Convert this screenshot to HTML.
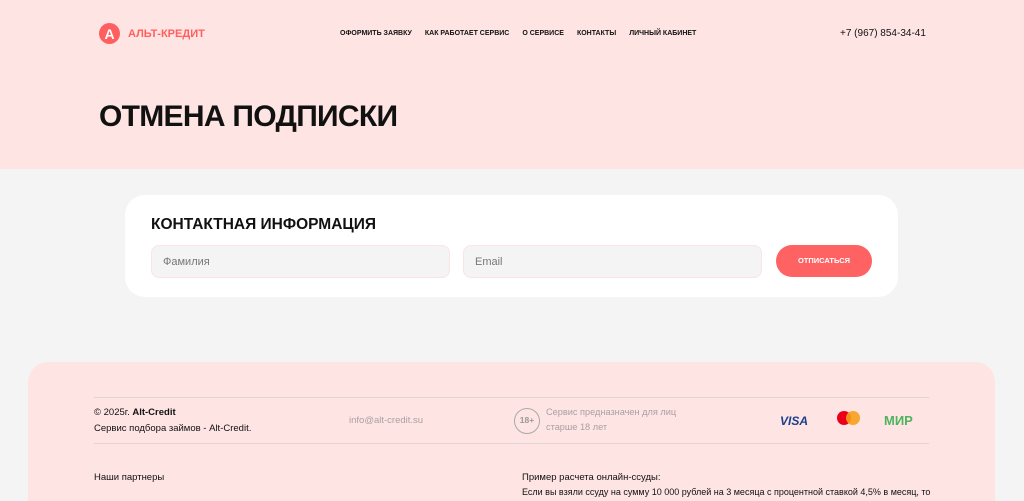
<!DOCTYPE html>
<html><head><meta charset="utf-8"><style>
*{box-sizing:border-box;margin:0;padding:0}
html,body{width:1024px;height:501px;overflow:hidden}
body{background:#f4f4f4;font-family:"Liberation Sans",sans-serif;color:#111;position:relative}
.hdr{position:absolute;left:0;top:0;width:1024px;height:169px;background:#ffe4e4}
.logo{position:absolute;left:99px;top:23px;display:flex;align-items:center}
.logo .c{width:21px;height:21px;border-radius:50%;background:#ff5f5f;color:#fff;font-weight:bold;font-size:14px;display:flex;align-items:center;justify-content:center}
.logo span{color:#ff5f5f;font-size:11px;font-weight:bold;margin-left:8px}
.nav{position:absolute;top:30px;left:340px;font-size:7px;font-weight:bold;display:flex}
.nav a{margin-right:13px;color:#111;text-decoration:none}
.phone{position:absolute;left:840px;top:28px;font-size:10px}
h1{position:absolute;left:99px;top:100px;font-size:30px;font-weight:bold;letter-spacing:-.7px}
.card{position:absolute;left:125px;top:195px;width:773px;height:102px;background:#fff;border-radius:20px}
.card h2{position:absolute;left:26px;top:21px;font-size:15.5px;font-weight:bold}
.inp{position:absolute;top:50px;height:33px;width:299px;background:#f4f4f4;border:1px solid #fbe4e4;border-radius:8px;font-size:11px;color:#777;padding:10px 0 0 11px}
.btn{position:absolute;left:651px;top:50px;width:96px;height:32px;background:#ff6262;border-radius:16px;color:#fff;font-size:7.5px;font-weight:bold;text-align:center;line-height:32px}
.ft{position:absolute;left:28px;top:362px;width:967px;height:160px;background:#ffe4e4;border-radius:20px}
.ln{position:absolute;left:66px;width:835px;height:1px;background:#e0d4d4}
.t{position:absolute;font-size:9.5px}
.g{color:#a9a0a0}
</style></head><body>
<div class="hdr">
<div class="logo"><div class="c">A</div><span>АЛЬТ-КРЕДИТ</span></div>
<div class="nav"><a>ОФОРМИТЬ ЗАЯВКУ</a><a>КАК РАБОТАЕТ СЕРВИС</a><a>О СЕРВИСЕ</a><a>КОНТАКТЫ</a><a>ЛИЧНЫЙ КАБИНЕТ</a></div>
<div class="phone">+7 (967) 854-34-41</div>
<h1>ОТМЕНА ПОДПИСКИ</h1>
</div>
<div class="card"><h2>КОНТАКТНАЯ ИНФОРМАЦИЯ</h2>
<div class="inp" style="left:26px">Фамилия</div>
<div class="inp" style="left:338px">Email</div>
<div class="btn">ОТПИСАТЬСЯ</div></div>
<div class="ft">
<div class="ln" style="top:35px"></div>
<div class="ln" style="top:81px"></div>
<div class="t" style="left:66px;top:45px">© 2025г. <b>Alt-Credit</b></div>
<div class="t" style="left:66px;top:61px">Сервис подбора займов - Alt-Credit.</div>
<div class="t g" style="left:321px;top:53px">info@alt-credit.su</div>
<div style="position:absolute;left:486px;top:46px;width:26px;height:26px;border:1.5px solid #aaa;border-radius:50%;font-size:8.5px;font-weight:bold;color:#999;text-align:center;line-height:23px">18+</div>
<div class="t g" style="left:518px;top:45px;font-size:9.2px">Сервис предназначен для лиц</div>
<div class="t g" style="left:518px;top:60px;font-size:9.2px">старше 18 лет</div>
<div style="position:absolute;left:752px;top:52px;font-size:12px;font-weight:bold;font-style:italic;color:#1a3f8f">VISA</div>
<div style="position:absolute;left:809px;top:49px;width:14px;height:14px;border-radius:50%;background:#eb001b"></div>
<div style="position:absolute;left:818px;top:49px;width:14px;height:14px;border-radius:50%;background:#f79e1b;opacity:.9"></div>
<div style="position:absolute;left:856px;top:51px;font-size:13px;font-weight:bold;color:#4db45e">МИР</div>
<div class="t" style="left:66px;top:110px">Наши партнеры</div>
<div class="t" style="left:494px;top:110px">Пример расчета онлайн-ссуды:</div>
<div class="t" style="left:494px;top:125px;font-size:9px">Если вы взяли ссуду на сумму 10 000 рублей на 3 месяца с процентной ставкой 4,5% в месяц, то</div>
</div>
</body></html>
